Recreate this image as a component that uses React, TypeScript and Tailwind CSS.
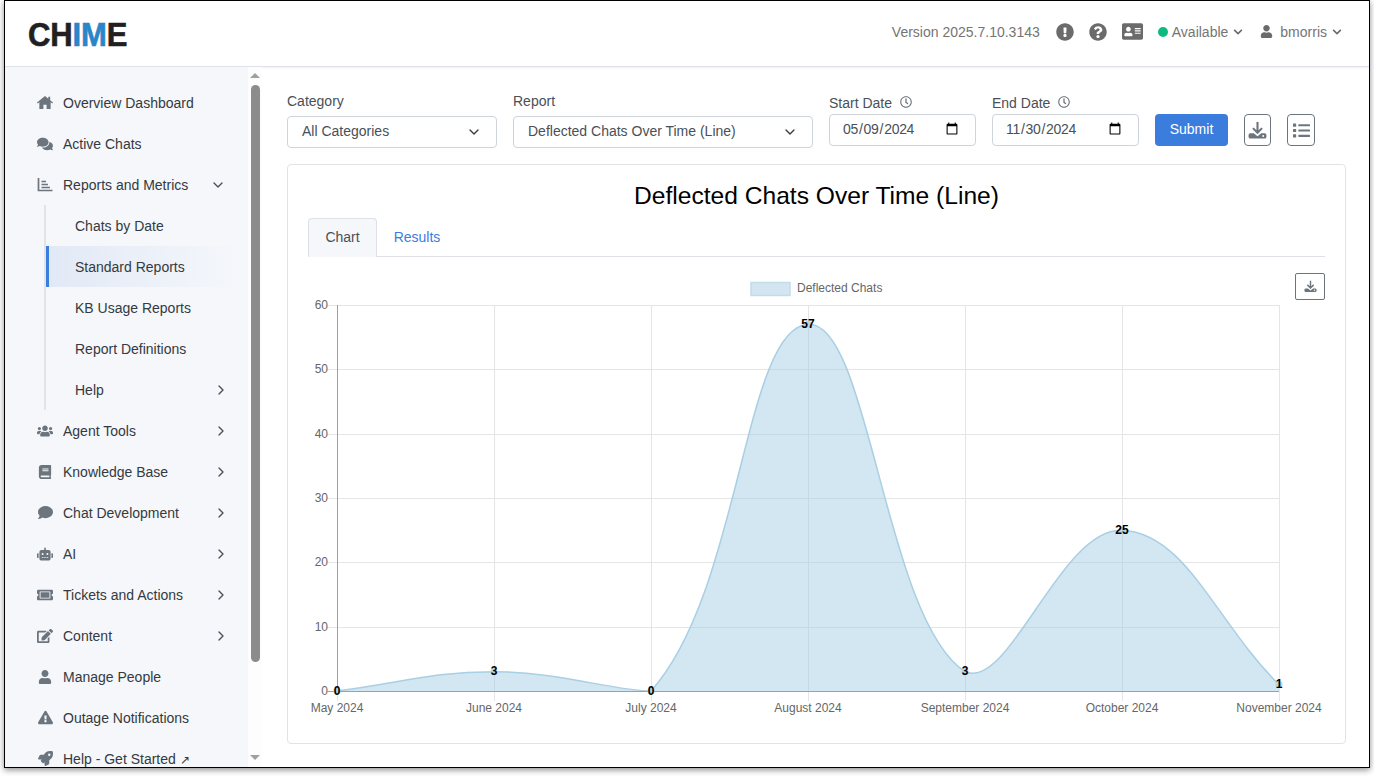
import React from 'react';
import { ChevronDown, ChevronRight } from 'lucide-react';
import {
  FaComments, FaUsers, FaBook, FaComment, FaRobot, FaTicketAlt, FaEdit, FaUser,
  FaExclamationTriangle, FaRocket, FaExclamationCircle, FaQuestionCircle, FaAddressCard,
  FaRegClock, FaList, FaChevronDown,
} from 'react-icons/fa';

const HomeIcon = () => (
  <svg width="17" height="15" viewBox="0 0 17 15" fill="currentColor">
    <path d="M8.5 0.5 L12 3.4 V1.5 H14 V5.1 L17 7.6 L16.2 8.6 L14.5 7.2 V14.5 H10.2 V10 H6.8 V14.5 H2.5 V7.2 L0.8 8.6 L0 7.6 Z" />
  </svg>
);

const ReportsIcon = () => (
  <svg width="16" height="15" viewBox="0 0 16 15" fill="none" stroke="currentColor" strokeWidth="1.7">
    <path d="M1.5 1 V13.5 H15.5" />
    <path d="M4.5 4.5 H9 M4.5 7.5 H11 M4.5 10.5 H13" />
  </svg>
);

const TrayDownload = ({ size }: { size: number }) => (
  <svg width={size} height={size} viewBox="0 0 20 20">
    <path d="M10 1 V11.5 M5.2 7.5 L10 12.3 L14.8 7.5" fill="none" stroke="currentColor" strokeWidth="2.2" />
    <path d="M2.5 13 H6 L10 16 L14 13 H17.5 Q19.5 13 19.5 15.5 Q19.5 18.5 17.5 18.5 H2.5 Q0.5 18.5 0.5 15.5 Q0.5 13 2.5 13 Z" fill="currentColor" />
    <circle cx="16" cy="15.8" r="1" fill="#fff" />
  </svg>
);

// Sidebar row
const NavItem = ({ icon, label, open, more }: { icon: React.ReactNode; label: React.ReactNode; open?: boolean; more?: boolean }) => (
  <div className="flex h-[41px] shrink-0 items-center pl-[32px] pr-[20px] text-sm text-[#343a40]">
    <span className="flex w-[16px] justify-center text-[#6c757d]">{icon}</span>
    <span className="ml-[10px] flex-1 whitespace-nowrap">{label}</span>
    {open && <ChevronDown size={16} className="mr-[2px] text-[#495057]" />}
    {more && <ChevronRight size={16} className="-mr-[1px] text-[#495057]" />}
  </div>
);

const SubItem = ({ label, active, more }: { label: string; active?: boolean; more?: boolean }) => (
  <div
    className={`flex h-[41px] items-center pr-[20px] text-sm text-[#343a40] ${
      active ? 'mr-[8px] border-l-[3px] border-[#3b7ddd] bg-gradient-to-r from-[#e2e9f6] to-[#f5f7fb] pl-[26px]' : 'pl-[29px]'
    }`}
  >
    <span className="flex-1">{label}</span>
    {more && <ChevronRight size={16} className="-mr-[1px] text-[#495057]" />}
  </div>
);

const Sidebar = () => (
  <div className="flex h-full w-[243px] shrink-0 flex-col overflow-hidden bg-[#f5f7fb] pt-[15px]">
    <NavItem icon={<HomeIcon />} label="Overview Dashboard" />
    <NavItem icon={<FaComments size={18} />} label="Active Chats" />
    <NavItem icon={<ReportsIcon />} label="Reports and Metrics" open />
    <div className="ml-[39px] border-l-2 border-[#e0e3e8]">
      <SubItem label="Chats by Date" />
      <SubItem label="Standard Reports" active />
      <SubItem label="KB Usage Reports" />
      <SubItem label="Report Definitions" />
      <SubItem label="Help" more />
    </div>
    <NavItem icon={<FaUsers size={18} />} label="Agent Tools" more />
    <NavItem icon={<FaBook size={14} />} label="Knowledge Base" more />
    <NavItem icon={<FaComment size={15} />} label="Chat Development" more />
    <NavItem icon={<FaRobot size={18} />} label="AI" more />
    <NavItem icon={<FaTicketAlt size={16} />} label="Tickets and Actions" more />
    <NavItem icon={<FaEdit size={16} />} label="Content" more />
    <NavItem icon={<FaUser size={14} />} label="Manage People" />
    <NavItem icon={<FaExclamationTriangle size={15} />} label="Outage Notifications" />
    <NavItem icon={<FaRocket size={15} />} label={<>Help - Get Started <span className="text-xs">↗</span></>} />
  </div>
);

const Scrollbar = () => (
  <div className="flex h-full w-[14px] shrink-0 flex-col items-center bg-[#fdfdfd]">
    <div className="mt-[6px] h-0 w-0 border-x-[5px] border-b-[5px] border-x-transparent border-b-[#a0a0a0]" />
    <div className="mt-[7px] h-[577px] w-[9px] rounded-full bg-[#8c8c8c]" />
    <div className="mt-[93px] h-0 w-0 border-x-[5px] border-t-[5px] border-x-transparent border-t-[#a0a0a0]" />
  </div>
);

const Header = () => (
  <div className="flex h-[66px] shrink-0 items-center border-b border-[#dfe1ea] bg-white pl-[23px] pr-[27px] shadow-[0_1px_2px_rgba(0,0,0,0.06)]">
    <div className="origin-center scale-y-[1.09] pt-[2px] text-[31px] leading-none font-bold tracking-[-0.1px] text-[#231f20] [-webkit-text-stroke:0.6px_#231f20]">
      CH<span className="text-[#2a86c8] [-webkit-text-stroke:0.6px_#2a86c8]">IM</span>E
    </div>
    <div className="ml-auto flex items-center pb-[4px] text-sm text-[#757575]">
      <span>Version 2025.7.10.3143</span>
      <FaExclamationCircle size={18} className="ml-[16px] text-[#6b6b6b]" />
      <FaQuestionCircle size={18} className="ml-[15px] text-[#6b6b6b]" />
      <FaAddressCard size={21} className="ml-[15px] text-[#6b6b6b]" />
      <span className="ml-[15px] h-[10px] w-[10px] rounded-full bg-[#10b981]" />
      <span className="ml-[4px]">Available</span>
      <FaChevronDown size={10} className="ml-[5px] text-[#6b6b6b]" />
      <FaUser size={13} className="ml-[17px] text-[#6b6b6b]" />
      <span className="ml-[7px]">bmorris</span>
      <FaChevronDown size={10} className="ml-[5px] text-[#6b6b6b]" />
    </div>
  </div>
);

const SelectField = ({ label, value, width }: { label: string; value: string; width: string }) => (
  <div className={width}>
    <div className="h-[20px] text-sm leading-5 text-[#495057]">{label}</div>
    <div className="relative mt-[5px]">
      <select
        defaultValue={value}
        className="h-[32px] w-full appearance-none rounded border border-[#ced4da] bg-white pb-[2px] pl-[14px] text-sm text-[#495057]"
      >
        <option>{value}</option>
      </select>
      <ChevronDown size={16} className="pointer-events-none absolute right-[15px] top-[8px] text-[#343a40]" />
    </div>
  </div>
);

const DateField = ({ label, value }: { label: string; value: string }) => (
  <div className="w-[147px] pt-[2px]">
    <div className="flex h-[20px] items-center text-sm text-[#495057]">
      {label}
      <FaRegClock size={12} className="ml-[8px] -translate-y-[1px] text-[#6c757d]" />
    </div>
    <input
      type="date"
      defaultValue={value}
      className="mt-[1px] h-[32px] w-full rounded border border-[#ced4da] bg-white pb-[2px] pl-[12px] pr-[14px] text-sm tracking-[-0.3px] text-[#495057]"
    />
  </div>
);

const labels = ['May 2024', 'June 2024', 'July 2024', 'August 2024', 'September 2024', 'October 2024', 'November 2024'];
const values = [0, 3, 0, 57, 3, 25, 1];
const xAt = (i: number) => 337 + i * 157;
const yAt = (v: number) => 691 - v * (386 / 60);

// same spline as a tension 0.4 line chart, control points kept inside the plot
function linePath() {
  const pts = values.map((v, i) => ({ x: xAt(i), y: yAt(v) }));
  const clampY = (y: number) => Math.min(691, Math.max(305, y));
  const ctrl = pts.map((p, i) => {
    const prev = pts[Math.max(i - 1, 0)];
    const next = pts[Math.min(i + 1, pts.length - 1)];
    const d01 = Math.hypot(p.x - prev.x, p.y - prev.y);
    const d12 = Math.hypot(next.x - p.x, next.y - p.y);
    const s01 = d01 / (d01 + d12);
    const s12 = d12 / (d01 + d12);
    return {
      px: p.x - 0.4 * s01 * (next.x - prev.x),
      py: clampY(p.y - 0.4 * s01 * (next.y - prev.y)),
      nx: p.x + 0.4 * s12 * (next.x - prev.x),
      ny: clampY(p.y + 0.4 * s12 * (next.y - prev.y)),
    };
  });
  let d = `M${pts[0].x} ${pts[0].y}`;
  for (let i = 1; i < pts.length; i++) {
    d += ` C${ctrl[i - 1].nx} ${ctrl[i - 1].ny} ${ctrl[i].px} ${ctrl[i].py} ${pts[i].x} ${pts[i].y}`;
  }
  return d;
}

const Chart = () => {
  const line = linePath();
  return (
    <svg viewBox="288 257 1057 480" className="block h-[480px] w-[1057px]" fontFamily="'Liberation Sans', Arial, sans-serif" fontSize="12">
      <rect x="751" y="282.5" width="39" height="13" fill="#d2e5f0" stroke="#c2dcea" strokeWidth="1.5" />
      <text x="797" y="292" fill="#666">Deflected Chats</text>
      {[0, 10, 20, 30, 40, 50, 60].map((v) => (
        <g key={v}>
          <line x1="327" x2="1279" y1={Math.round(yAt(v)) + 0.5} y2={Math.round(yAt(v)) + 0.5} stroke="#e5e5e5" />
          <text x="328" y={yAt(v) + 4} fill="#666" textAnchor="end">{v}</text>
        </g>
      ))}
      {labels.map((l, i) => (
        <g key={l}>
          <line x1={xAt(i) + 0.5} x2={xAt(i) + 0.5} y1="305" y2="701" stroke="#e5e5e5" />
          <text x={xAt(i)} y="712" fill="#666" textAnchor="middle">{l}</text>
        </g>
      ))}
      <path d={`${line} L1279 691 L337 691 Z`} fill="rgba(158,202,225,0.46)" />
      <path d={line} fill="none" stroke="#a9cfe4" strokeWidth="1.5" />
      <line x1="337.5" x2="337.5" y1="305" y2="691" stroke="#a0a0a0" />
      <line x1="327" x2="1279" y1="691.5" y2="691.5" stroke="#a0a0a0" />
      {values.map((v, i) => (
        <circle key={i} cx={xAt(i)} cy={yAt(v)} r="3.5" fill="#b5d6e8" />
      ))}
      {values.map((v, i) => (
        <text key={i} x={xAt(i)} y={yAt(v) + 3.5} fontWeight="700" fill="#000" textAnchor="middle">{v}</text>
      ))}
    </svg>
  );
};

const Main = () => (
  <div className="min-w-0 flex-1 pl-[25px] pt-[24px]">
    <div className="flex items-start gap-4">
      <SelectField label="Category" value="All Categories" width="w-[210px]" />
      <SelectField label="Report" value="Deflected Chats Over Time (Line)" width="w-[300px]" />
      <DateField label="Start Date" value="2024-05-09" />
      <DateField label="End Date" value="2024-11-30" />
      <button className="mt-[23px] h-[32px] w-[73px] rounded bg-[#3b7ddd] pb-[2px] text-sm text-white">Submit</button>
      <button className="mt-[23px] flex h-[32px] w-[27px] items-center justify-center rounded border border-[#6c757d] text-[#6c757d]">
        <TrayDownload size={19} />
      </button>
      <button className="mt-[23px] flex h-[32px] w-[28px] items-center justify-center rounded border border-[#6c757d] text-[#6c757d]">
        <FaList size={17} />
      </button>
    </div>
    <div className="relative mt-[16px] h-[580px] w-[1059px] rounded border border-[#e1e3e6]">
      <h2 className="pt-[17px] text-center text-[24.6px] leading-7 text-black">Deflected Chats Over Time (Line)</h2>
      <div className="mx-[20px] mt-[8px] flex h-[39px] border-b border-[#dee2e6] text-sm">
        <div className="flex h-[39px] w-[69px] items-center justify-center rounded-t border border-b-0 border-[#dee2e6] bg-[#f5f7fb] pb-[2px] text-[#495057]">Chart</div>
        <div className="flex w-[80px] items-center justify-center text-[#3b7ddd]">Results</div>
      </div>
      <Chart />
      <button className="absolute right-[20px] top-[108px] flex h-[27px] w-[30px] items-center justify-center rounded-[2px] border border-[#6c757d] text-[#6c757d]">
        <TrayDownload size={13} />
      </button>
    </div>
  </div>
);

export default function App() {
  return (
    <div className="h-[776px] w-[1374px] overflow-hidden bg-white pl-[4px] font-['Liberation_Sans',Arial,sans-serif]">
      <div className="flex h-[768px] w-[1366px] flex-col overflow-hidden border border-black bg-white shadow-[0_2px_6px_rgba(0,0,0,0.45)]">
        <Header />
        <div className="flex min-h-0 flex-1">
          <Sidebar />
          <Scrollbar />
          <Main />
        </div>
      </div>
    </div>
  );
}
